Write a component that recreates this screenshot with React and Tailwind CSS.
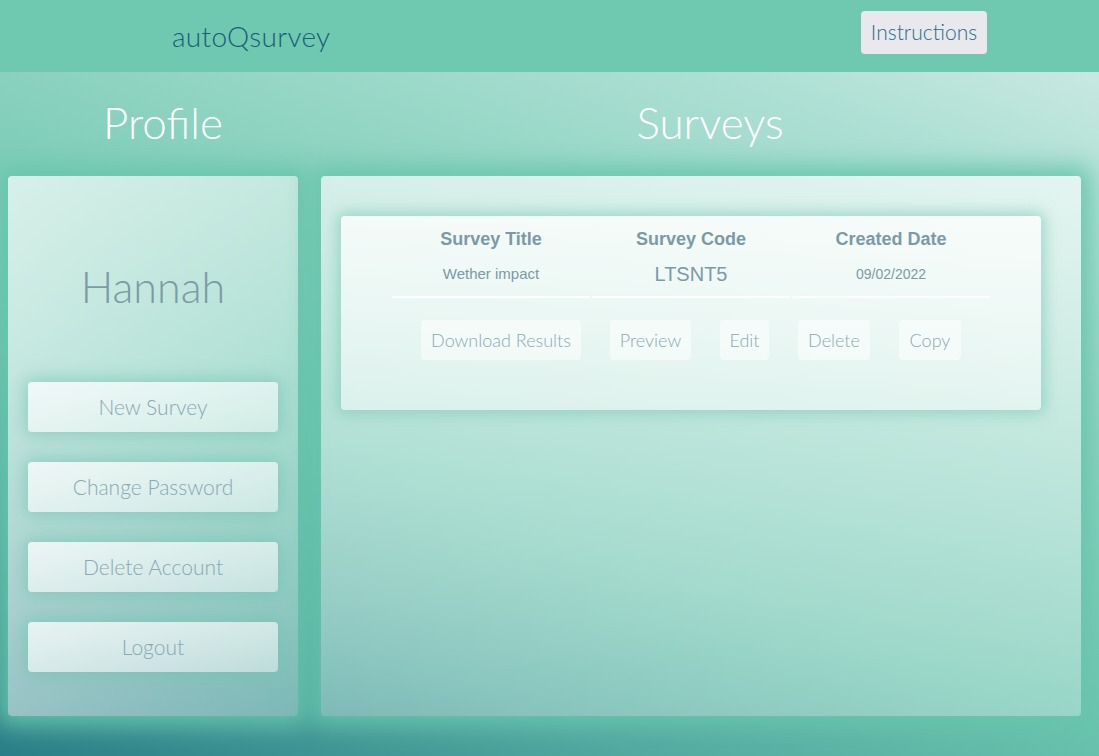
import React from "react";

const profileActions = ["New Survey", "Change Password", "Delete Account", "Logout"];

const surveyActions = [
  { label: "Download Results", w: "w-[160px]" },
  { label: "Preview", w: "w-[81px]" },
  { label: "Edit", w: "w-[49px]" },
  { label: "Delete", w: "w-[72px]" },
  { label: "Copy", w: "w-[62px]" },
];

const surveys = [{ title: "Wether impact", code: "LTSNT5", created: "09/02/2022" }];

function Header() {
  return (
    <header className="h-[72px] bg-[#6fc8b0] flex items-center justify-between pl-[172px] pr-[112px]">
      <span className="text-[28px] font-light text-[#1b5d78] tracking-[0.3px]">autoQsurvey</span>
      <button className="w-[126px] h-[43px] mt-[-8px] rounded bg-[#e8e8ed] text-[21px] font-light text-[#2b6c8a]">
        Instructions
      </button>
    </header>
  );
}

function ProfileCard() {
  return (
    <div className="h-[540px] rounded bg-linear-to-br from-white/70 via-white/50 to-white/30 shadow-[0_0_22px_10px_rgba(104,196,172,0.9)] flex flex-col items-center">
      <div className="mt-[86px] h-[50px] leading-[50px] text-[43px] font-light text-[#7b9ba6]">Hannah</div>
      <div className="mt-[70px] flex flex-col gap-[30px]">
        {profileActions.map((a) => (
          <button
            key={a}
            className="w-[250px] h-[50px] rounded bg-linear-to-br from-white/75 to-white/45 shadow-[0_0_16px_4px_rgba(110,195,175,0.55)] text-[21px] font-light text-[#88a8b3]"
          >
            {a}
          </button>
        ))}
      </div>
    </div>
  );
}

function SurveyCard({ survey }) {
  return (
    <div className="w-[700px] h-[194px] rounded bg-linear-to-b from-white/75 to-white/50 shadow-[0_0_14px_4px_rgba(120,200,180,0.6)] pt-[10px] flex flex-col items-center">
      <div className="grid grid-cols-3 gap-x-[2px] w-[598px] font-['Liberation_Sans',Arial,sans-serif] text-[#7b9aa5]">
        <div className="h-[26px] flex items-center justify-center text-[18px] font-bold">Survey Title</div>
        <div className="h-[26px] flex items-center justify-center text-[18px] font-bold">Survey Code</div>
        <div className="h-[26px] flex items-center justify-center text-[18px] font-bold">Created Date</div>
        <div className="h-[46px] border-b-2 border-white flex items-center justify-center text-[15px]">{survey.title}</div>
        <div className="h-[46px] border-b-2 border-white flex items-center justify-center text-[20px]">{survey.code}</div>
        <div className="h-[46px] border-b-2 border-white flex items-center justify-center text-[14px]">{survey.created}</div>
      </div>
      <div className="mt-[22px] flex gap-[29px]">
        {surveyActions.map((a) => (
          <button
            key={a.label}
            className={`${a.w} h-[40px] rounded bg-white/50 text-[18px] font-light text-[#8aa9b4]`}
          >
            {a.label}
          </button>
        ))}
      </div>
    </div>
  );
}

export default function App() {
  return (
    <div className="min-h-[756px] font-['Lato','Open_Sans',sans-serif] bg-[linear-gradient(20deg,#2a7e87_0%,#52a9a0_20%,#6ac4ae_37%,#8dd3c0_62%,#acdfd3_81%,#d5ede7_100%)]">
      <Header />
      <main className="pl-[8px] pr-[18px]">
        <div className="grid grid-cols-[290px_760px] gap-x-[23px]">
          <h2 className="h-[104px] pb-[4px] flex items-center justify-center pl-5 text-[44px] font-light text-white">Profile</h2>
          <h2 className="h-[104px] pb-[4px] flex items-center justify-center pl-[18px] text-[44px] font-light text-white">Surveys</h2>
          <ProfileCard />
          <div className="h-[540px] rounded bg-linear-to-b from-white/65 to-white/30 shadow-[0_0_22px_10px_rgba(104,196,172,0.9)] px-5 pt-[40px]">
            {surveys.map((s) => (
              <SurveyCard key={s.code} survey={s} />
            ))}
          </div>
        </div>
      </main>
    </div>
  );
}
